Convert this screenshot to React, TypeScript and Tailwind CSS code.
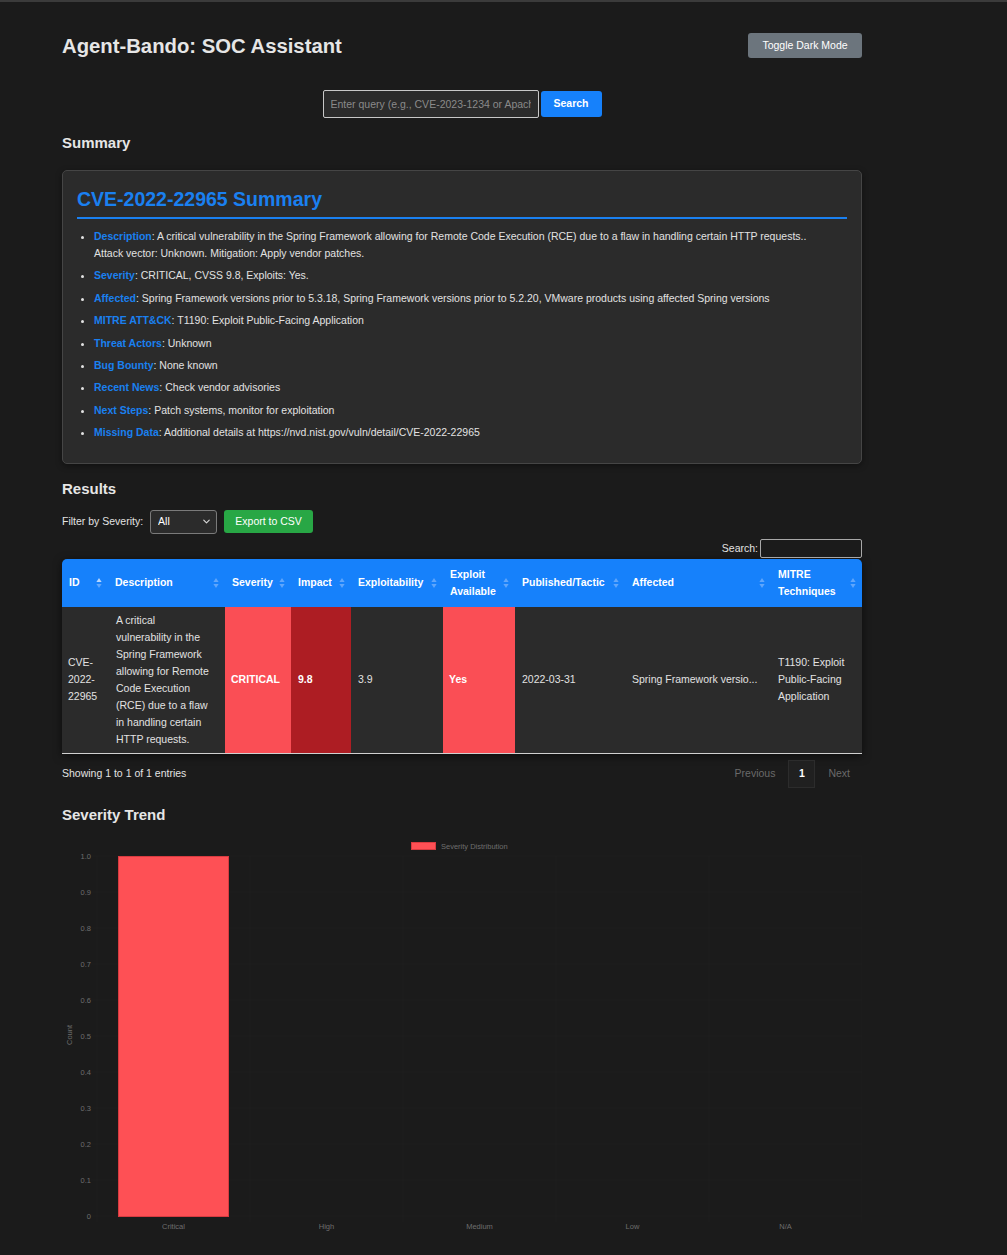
import { ChevronDown } from "lucide-react";

const SUMMARY: [string, string][] = [
  [
    "Description",
    "A critical vulnerability in the Spring Framework allowing for Remote Code Execution (RCE) due to a flaw in handling certain HTTP requests.. Attack vector: Unknown. Mitigation: Apply vendor patches.",
  ],
  ["Severity", "CRITICAL, CVSS 9.8, Exploits: Yes."],
  [
    "Affected",
    "Spring Framework versions prior to 5.3.18, Spring Framework versions prior to 5.2.20, VMware products using affected Spring versions",
  ],
  ["MITRE ATT&CK", "T1190: Exploit Public-Facing Application"],
  ["Threat Actors", "Unknown"],
  ["Bug Bounty", "None known"],
  ["Recent News", "Check vendor advisories"],
  ["Next Steps", "Patch systems, monitor for exploitation"],
  ["Missing Data", "Additional details at https://nvd.nist.gov/vuln/detail/CVE-2022-22965"],
];

const COLUMNS = [
  { label: "ID", w: "w-[46px]", active: true },
  { label: "Description", w: "w-[117px]" },
  { label: "Severity", w: "w-[66px]" },
  { label: "Impact", w: "w-[60px]" },
  { label: "Exploitability", w: "w-[92px]" },
  { label: "Exploit Available", w: "w-[72px]" },
  { label: "Published/Tactic", w: "w-[110px]" },
  { label: "Affected", w: "w-[146px]" },
  { label: "MITRE Techniques", w: "w-[91px]" },
];

function SortIcon({ active }: { active?: boolean }) {
  return (
    <svg width="6" height="11" viewBox="0 0 6 11" className="absolute right-[6px] top-1/2 -translate-y-1/2">
      <path d="M3 0.5 L5.6 4.6 L0.4 4.6 Z" fill={active ? "#b9d7fd" : "#5fa6fc"} />
      <path d="M3 10.5 L5.6 6.4 L0.4 6.4 Z" fill="#5fa6fc" />
    </svg>
  );
}

/* severity chart — drawn like the chart.js bar chart */
function SeverityChart() {
  const ticks = [1.0, 0.9, 0.8, 0.7, 0.6, 0.5, 0.4, 0.3, 0.2, 0.1, 0];
  const labels = ["Critical", "High", "Medium", "Low", "N/A"];
  const top = 26;
  const step = 36;
  const left = 35;
  const cat = 153;
  return (
    <svg width="800" height="420" viewBox="0 0 800 420">
      {ticks.map((t, i) => (
        <g key={t}>
          <line x1={left - 6} x2={800} y1={top + i * step} y2={top + i * step} stroke="#1e1e1e" strokeWidth="1" />
          <text x={29} y={top + i * step + 2.5} textAnchor="end" fontSize="7.5" fill="#6e6e6e" fontFamily="Liberation Sans, Arial, sans-serif">
            {i === 10 ? "0" : t.toFixed(1)}
          </text>
        </g>
      ))}
      {[0, 1, 2, 3, 4, 5].map((i) => (
        <line key={i} x1={left + i * cat} x2={left + i * cat} y1={top} y2={top + 10 * step + 6} stroke="#1e1e1e" strokeWidth="1" />
      ))}
      <rect x={56.5} y={top + 0.5} width={110} height={360} fill="#fe5055" stroke="#d83b40" strokeWidth="1" />
      {labels.map((l, i) => (
        <text key={l} x={left + cat / 2 + i * cat} y={399} textAnchor="middle" fontSize="7.5" fill="#6e6e6e" fontFamily="Liberation Sans, Arial, sans-serif">
          {l}
        </text>
      ))}
      <text x={0} y={0} transform="translate(9.5 205) rotate(-90)" textAnchor="middle" fontSize="7.5" fill="#6e6e6e" fontFamily="Liberation Sans, Arial, sans-serif">
        Count
      </text>
      <rect x={349.5} y={12.5} width={24} height={7} fill="#fe5055" stroke="#d83b40" strokeWidth="1" />
      <text x={379} y={18.5} fontSize="7.5" fill="#6e6e6e" fontFamily="Liberation Sans, Arial, sans-serif">
        Severity Distribution
      </text>
    </svg>
  );
}

export default function App() {
  return (
    <div className="min-h-[1255px] bg-[#1b1b1b] text-[#e2e2e2] font-['Liberation_Sans',Arial,sans-serif]">
      <div className="h-[2px] bg-[#3b3b3b]" />
      <div className="w-[800px] ml-[62px] pt-[31px] pb-6">
        {/* header */}
        <div className="flex items-center justify-between h-[25px]">
          <h1 className="text-[20.3px] font-bold leading-6 text-[#e6e6e6]">Agent-Bando: SOC Assistant</h1>
          <button className="h-[25px] w-[114px] rounded-[3px] bg-[#6c757d] text-[10.5px] text-white">Toggle Dark Mode</button>
        </div>

        {/* search */}
        <div className="mt-[32px] flex justify-center items-center gap-[2px]">
          <input
            placeholder="Enter query (e.g., CVE-2023-1234 or Apache)"
            className="h-[28px] w-[216px] rounded-[2px] border border-[#c8c8c8] bg-[#2b2b2b] px-[7px] text-[10.5px] text-white placeholder:text-[#8a8a8a] outline-none"
          />
          <button className="h-[26px] w-[61px] rounded-[3px] bg-[#1681fb] text-[10.5px] font-bold text-white">Search</button>
        </div>

        {/* summary */}
        <h2 className="mt-[15px] text-[15px] font-bold leading-5 text-[#e6e6e6]">Summary</h2>
        <div className="mt-[17px] rounded-[5px] border border-[#454545] bg-[#2b2b2b] px-[14px] pt-[16px] pb-[21.5px] shadow-[0_2px_6px_rgba(0,0,0,0.4)]">
          <h3 className="pb-[6px] text-[19.5px] font-bold leading-6 text-[#1a80f0]">CVE-2022-22965 Summary</h3>
          <div className="h-[1.5px] bg-[#1a80f0]" />
          <ul className="mt-[9.5px] flex flex-col gap-[5.4px] pl-[17px] pr-[30px] list-disc marker:text-[#e2e2e2] text-[10.5px] leading-[17px] text-[#e2e2e2]">
            {SUMMARY.map(([k, v]) => (
              <li key={k}>
                <span className="font-bold text-[#1a80f0]">{k}</span>: {v}
              </li>
            ))}
          </ul>
        </div>

        {/* results */}
        <h2 className="mt-[15px] text-[15px] font-bold leading-5 text-[#e6e6e6]">Results</h2>
        <div className="mt-[11px] flex items-center h-[24px] text-[10.5px]">
          <span className="text-[#e2e2e2]">Filter by Severity:</span>
          <div className="relative ml-[7px]">
            <select className="appearance-none h-[24px] w-[67px] rounded-[3px] border border-[#7a7a7a] bg-[#2b2b2b] pl-[7px] text-[10.5px] text-white outline-none">
              <option>All</option>
            </select>
            <ChevronDown size={11} strokeWidth={2.5} className="pointer-events-none absolute right-[5px] top-[6.5px] text-[#d8d8d8]" />
          </div>
          <button className="ml-[7px] h-[23px] w-[89px] rounded-[3px] bg-[#28a745] text-[10.5px] text-white">Export to CSV</button>
        </div>

        <div className="mt-[6px] flex items-center justify-end gap-[2px] text-[10.5px] h-[18px]">
          <span className="text-[#e2e2e2]">Search:</span>
          <input className="h-[19px] w-[102px] border border-[#a8a8a8] rounded-[2px] bg-[#1b1b1b] outline-none" />
        </div>

        <div className="mt-[1px] rounded-t-[5px] overflow-hidden shadow-[0_2px_8px_rgba(0,0,0,0.55)]">
          <table className="w-[800px] table-fixed border-collapse text-[10.5px] leading-[17px]">
            <thead>
              <tr className="bg-[#1681fb] text-white">
                {COLUMNS.map((c) => (
                  <th key={c.label} className={`${c.w} relative h-[48px] py-[7px] pl-[7px] pr-[16px] text-left align-middle font-bold`}>
                    {c.label}
                    <SortIcon active={c.active} />
                  </th>
                ))}
              </tr>
            </thead>
            <tbody>
              <tr className="bg-[#2b2b2b] text-[#e2e2e2] border-b border-[#d0d0d0] align-middle">
                <td className="px-[6px] py-[5px]">CVE-2022-22965</td>
                <td className="pl-[8px] pr-[13px] py-[5px]">
                  A critical vulnerability in the Spring Framework allowing for Remote Code Execution (RCE) due to a flaw in handling certain HTTP requests.
                </td>
                <td className="bg-[#fa4e55] px-[6px] py-[5px] font-bold text-white">CRITICAL</td>
                <td className="bg-[#ad1d23] px-[7px] py-[5px] font-bold text-white">9.8</td>
                <td className="px-[7px] py-[5px]">3.9</td>
                <td className="bg-[#fa4e55] px-[6px] py-[5px] font-bold text-white">Yes</td>
                <td className="px-[7px] py-[5px]">2022-03-31</td>
                <td className="px-[7px] py-[5px] whitespace-nowrap">Spring Framework versio...</td>
                <td className="px-[7px] py-[5px]">T1190: Exploit Public-Facing Application</td>
              </tr>
            </tbody>
          </table>
        </div>

        <div className="mt-[6px] flex items-center justify-between h-[28px] text-[10.5px]">
          <span className="text-[#e2e2e2]">Showing 1 to 1 of 1 entries</span>
          <div className="flex items-center">
            <span className="text-[#6a6a6a]">Previous</span>
            <span className="ml-[13px] flex h-[28px] w-[27px] items-center justify-center border border-[#2c2c2c] bg-[#202020] font-bold text-white">1</span>
            <span className="ml-[13px] mr-[12px] text-[#6a6a6a]">Next</span>
          </div>
        </div>

        <h2 className="mt-[17px] text-[15px] font-bold leading-5 text-[#e6e6e6]">Severity Trend</h2>
        <div className="mt-[5px]">
          <SeverityChart />
        </div>
      </div>
    </div>
  );
}
